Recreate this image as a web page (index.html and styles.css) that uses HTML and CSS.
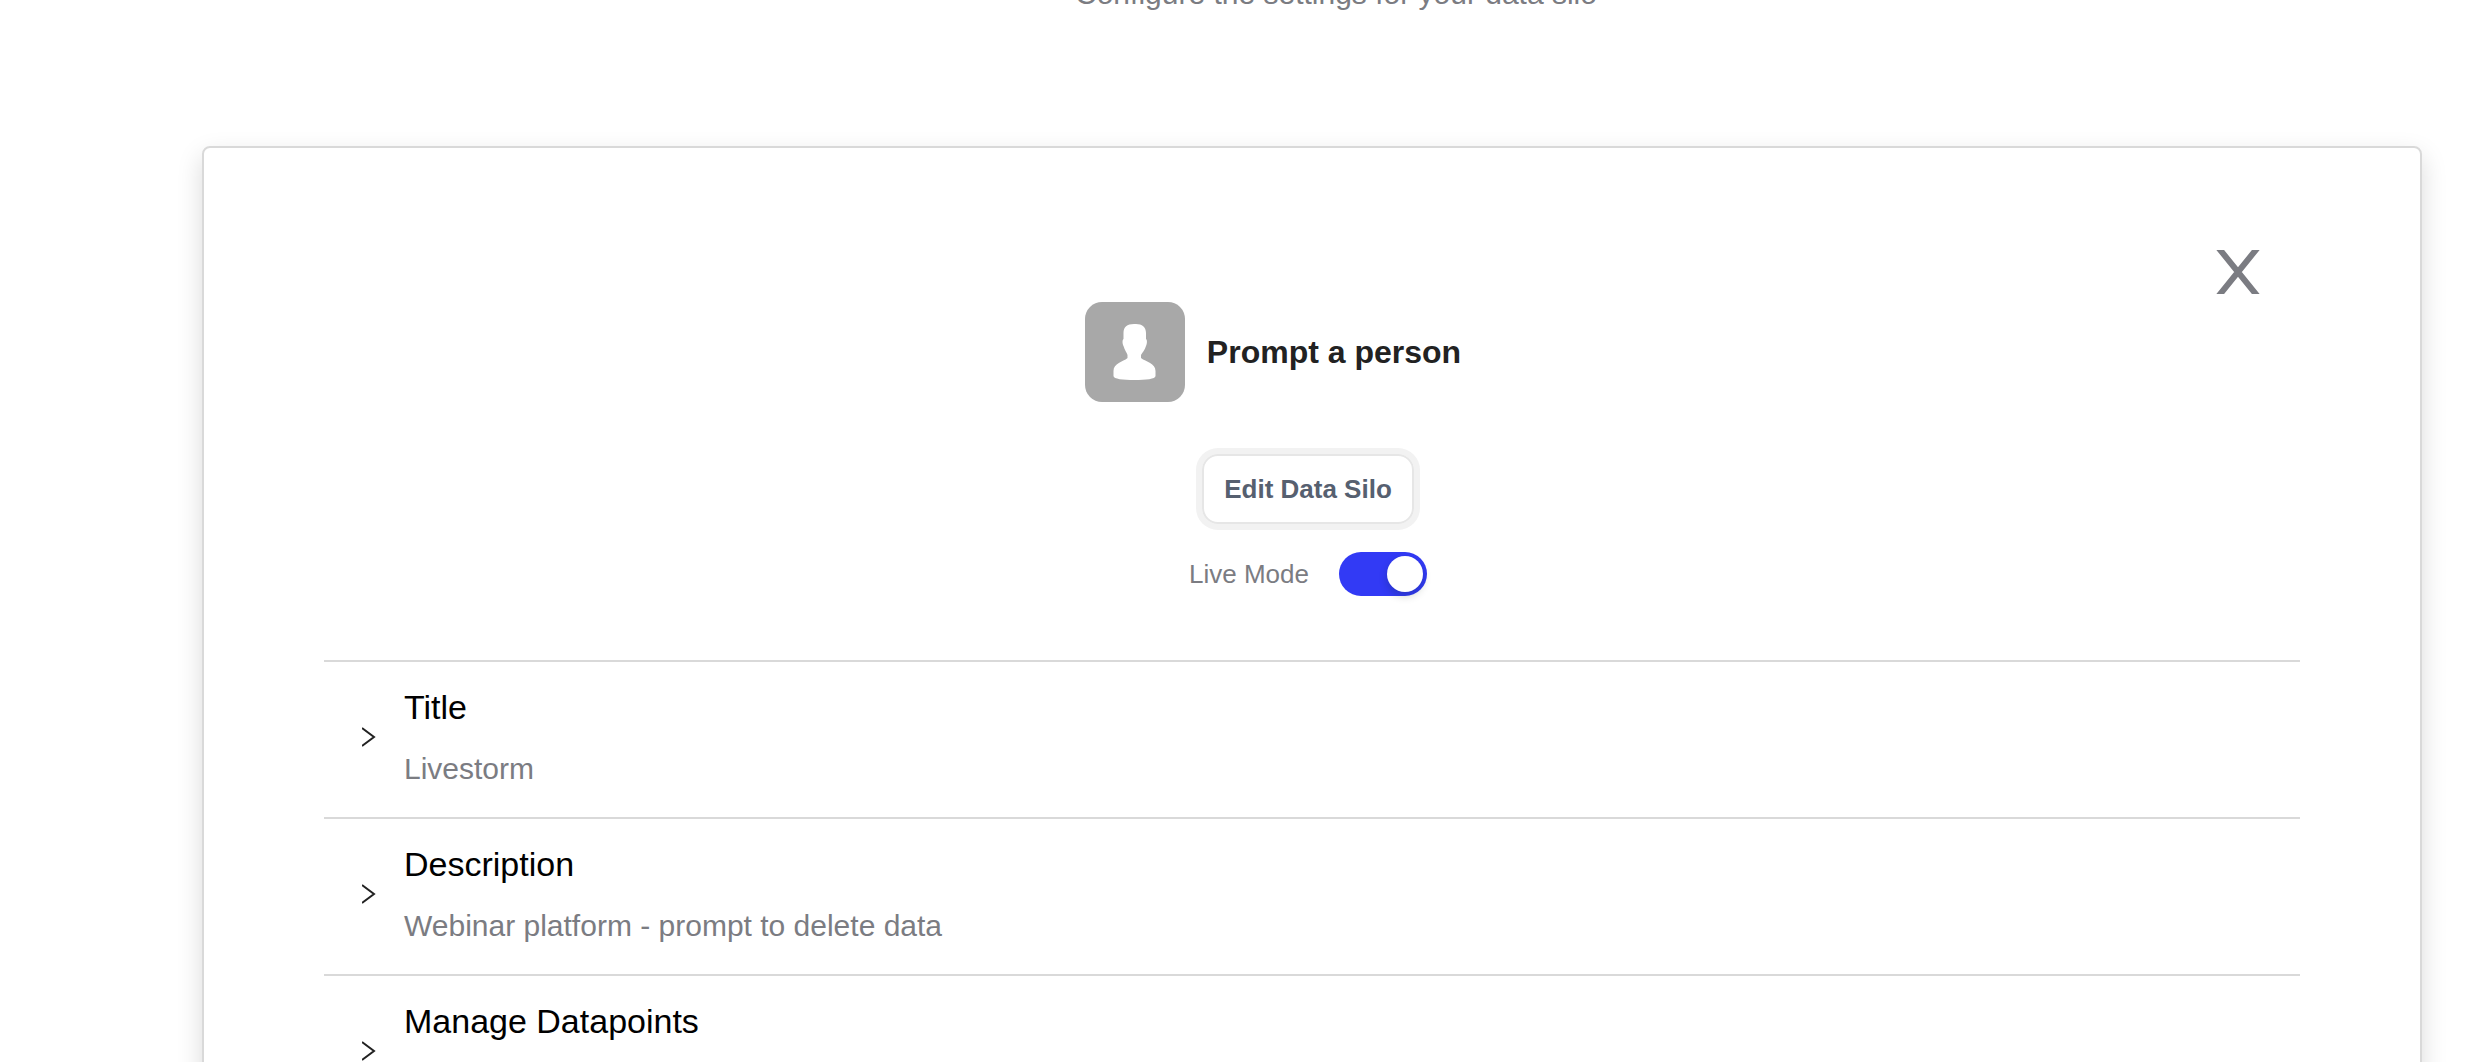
FILE: index.html
```html
<!DOCTYPE html>
<html lang="en">
	<head>
		<meta charset="UTF-8">
		<title>Data Silo Settings</title>
		<link rel="stylesheet" href="styles.css">
	</head>
	<body>
		<main class="page">
			<p class="intro">Configure the settings for your data silo</p>
			<section class="card">
				<!--close-->
				<div class="card-top">
					<button class="close" type="button" aria-label="Close">
						<svg width="44" height="44" viewBox="0 0 44 44">
							<path d="M1 -4 L43 48 M43 -4 L1 48"/>
						</svg>
					</button>
				</div>
				<!--silo header-->
				<header class="silo">
					<div class="silo-name">
						<svg class="avatar" width="100" height="100" viewBox="0 0 100 100">
							<rect width="100" height="100" rx="17" fill="#a8a8a8"/>
							<path fill="#fff" d="M49 22C42 22 38.500 25 38.500 31V37C37 38 37.500 42 38.500 44C39.500 48 42 51 42.500 53V56C38 60 28.500 61 28.500 69V74C28.500 77 38 78 49.500 78S70.500 77 70.500 74V69C70.500 61 61 60 56 56V53C57 51 60 48 61 44C62 42 62.500 38 61 37V31C61 25 57 22 51 22Z"/>
						</svg>
						<h1>Prompt a person</h1>
					</div>
					<button class="edit" type="button">Edit Data Silo</button>
					<label class="live">
						<span>Live Mode</span>
						<input class="toggle" type="checkbox" role="switch" checked>
					</label>
				</header>
				<!--settings-->
				<div class="settings">
					<button class="row" type="button">
						<svg class="arrow" width="14" height="20" viewBox="0 0 14 20"><path d="M0 1L12 10L0 19"/></svg>
						<span class="text">
							<span class="title">Title</span>
							<span class="value">Livestorm</span>
						</span>
					</button>
					<button class="row" type="button">
						<svg class="arrow" width="14" height="20" viewBox="0 0 14 20"><path d="M0 1L12 10L0 19"/></svg>
						<span class="text">
							<span class="title">Description</span>
							<span class="value">Webinar platform - prompt to delete data</span>
						</span>
					</button>
					<button class="row" type="button">
						<svg class="arrow" width="14" height="20" viewBox="0 0 14 20"><path d="M0 1L12 10L0 19"/></svg>
						<span class="text">
							<span class="title">Manage Datapoints</span>
							<span class="value"></span>
						</span>
					</button>
				</div>
			</section>
		</main>
	</body>
</html>
```

FILE: styles.css
```css
*{
	box-sizing: border-box;
}
body,h1,p{
	margin: 0;
}
body{
	background-color: #fff;
	font-family: "Liberation Sans", Arial, sans-serif;
	color: #222;
}
button{
	font-family: inherit;
	background: none;
	border: none;
	padding: 0;
	cursor: pointer;
}
.page{
	display: flex;
	flex-direction: column;
	height: 100vh;
	padding-left: 202px;
	overflow: hidden;
}
/* scrolled partly out of view */
.intro{
	flex: none;
	margin-top: -28px;
	margin-bottom: 130px;
	font-size: 30px;
	line-height: 44px;
	color: #7b7c82;
	text-align: center;
}
.card{
	flex: none;
	margin-right: 48px;
	padding: 102px 120px;
	border: 2px solid #d9d9d9;
	border-radius: 8px;
	box-shadow: 0 10px 26px rgba(0, 0, 0, 0.15);
}
/*close*/
.card-top{
	display: flex;
	justify-content: flex-end;
	padding-right: 40px;
}
.close svg{
	display: block;
	fill: none;
	stroke: #7b7c82;
	stroke-width: 6;
}
/*silo header*/
.silo{
	display: flex;
	flex-direction: column;
	align-items: center;
	padding-right: 8px;
	padding-top: 8px;
}
.silo-name{
	display: flex;
	align-items: center;
	gap: 22px;
	padding-right: 70px;
}
.silo h1{
	font-size: 32px;
	line-height: 48px;
}
.edit{
	height: 70px;
	margin-top: 52px;
	padding: 0 20px;
	border: 2px solid #e6e6e6;
	border-radius: 16px;
	box-shadow: 0 0 0 6px #f2f2f2;
	font-size: 26px;
	font-weight: bold;
	color: #566070;
}
.live{
	display: flex;
	align-items: center;
	gap: 30px;
	margin-top: 28px;
	font-size: 26px;
	line-height: 44px;
	color: #7b7c82;
}
.toggle{
	appearance: none;
	width: 88px;
	height: 44px;
	margin: 0;
	padding: 4px;
	border-radius: 22px;
	background-color: #b8b8b8;
}
.toggle::before{
	content: "";
	display: block;
	width: 36px;
	height: 36px;
	border-radius: 50%;
	background-color: #fff;
	box-shadow: 0 4px 8px rgba(0, 35, 11, 0.2);
}
.toggle:checked{
	background-color: #323af5;
}
.toggle:checked::before{
	margin-left: auto;
}
/*settings*/
.settings{
	margin-top: 64px;
}
.row{
	display: flex;
	align-items: center;
	gap: 28px;
	width: 100%;
	padding: 21px 38px 26px;
	border-top: 2px solid #d9d9d9;
	text-align: left;
}
.arrow{
	flex: none;
	fill: none;
	stroke: #222;
	stroke-width: 2;
}
.text{
	display: flex;
	flex-direction: column;
	gap: 16px;
}
.title{
	font-size: 34px;
	line-height: 48px;
	color: #000;
}
.value{
	min-height: 44px;
	font-size: 30px;
	line-height: 44px;
	color: #7b7c82;
}
```
